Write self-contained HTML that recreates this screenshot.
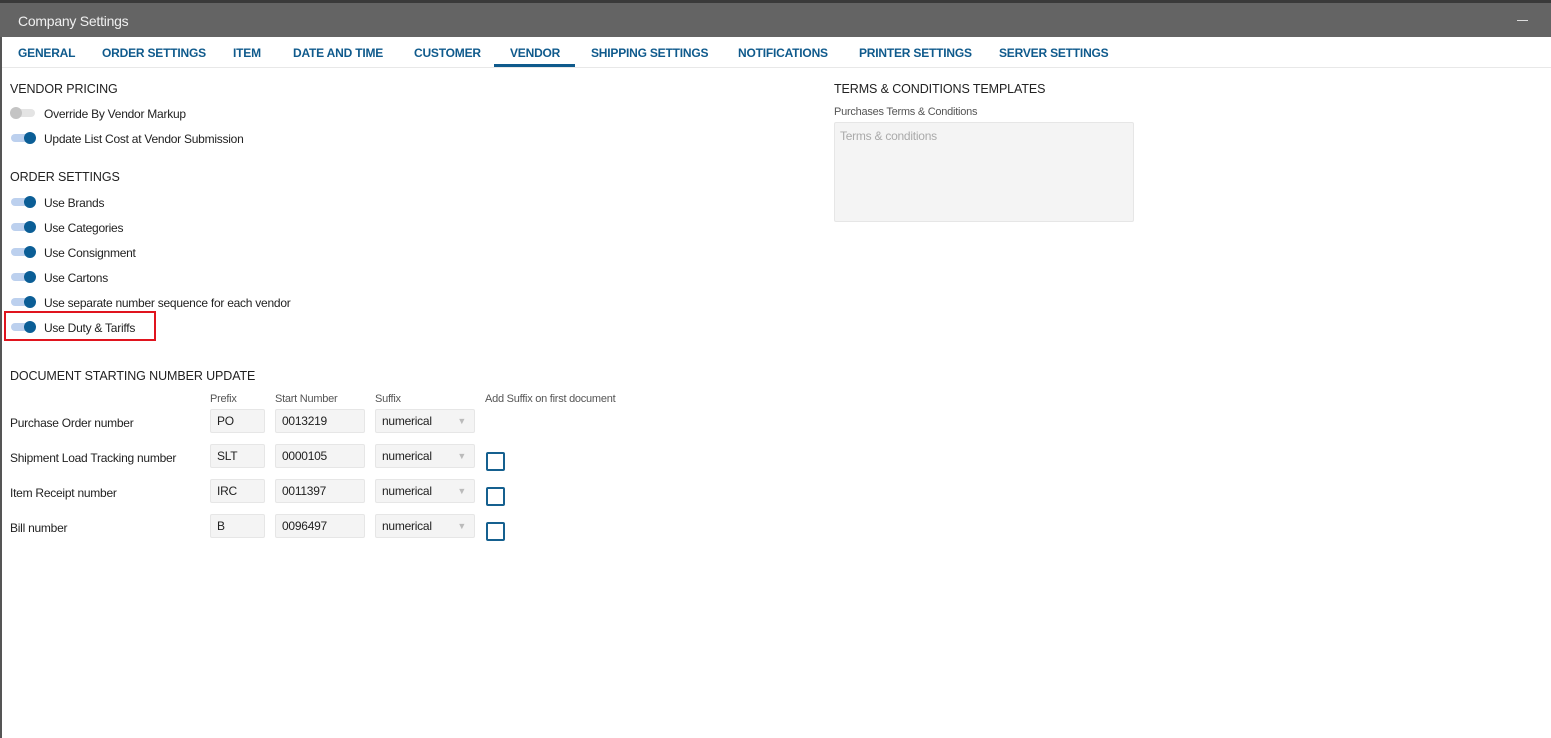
<!DOCTYPE html>
<html><head><style>
body{margin:0;width:1551px;height:738px;background:#fff;font-family:"Liberation Sans",sans-serif;color:#222;position:relative;overflow:hidden;font-size:12px;letter-spacing:-0.25px}
.a{position:absolute;white-space:nowrap}
.top{left:0;top:0;width:1551px;height:3px;background:#3a3a3a}
.title{left:0;top:3px;width:1551px;height:34px;background:#646464}
.lb{left:0;top:37px;width:2px;height:701px;background:#555}
.tab{top:46px;font-size:12px;font-weight:bold;color:#0f5a8c;letter-spacing:-0.2px}
.h{font-size:12.5px;color:#222;letter-spacing:-0.1px}
.tg{width:24px;height:8px;border-radius:4px;background:#bcd0ee}
.tg::after{content:"";position:absolute;right:-1px;top:-2px;width:12px;height:12px;border-radius:50%;background:#0b5e96}
.tg.off{background:#e4e4e4}
.tg.off::after{left:-1px;right:auto;background:#c4c4c4}
.in{height:24px;background:#f4f4f4;border:1px solid #e6e6e6;border-radius:2px;box-sizing:border-box;line-height:22px;padding-left:6px}
.cb{width:15px;height:15px;border:2px solid #15608f;border-radius:2px}
.sm{font-size:11px;color:#555}
</style></head><body>
<div class="a top"></div>
<div class="a title"></div>
<div class="a" style="left:18px;top:13px;color:#f0f0f0;font-size:14px;">Company Settings</div>
<div class="a" style="left:1517px;top:20px;width:11px;height:1px;background:#ddd"></div>
<div class="a lb"></div>
<div class="a tab" style="left:18px">GENERAL</div>
<div class="a tab" style="left:102px">ORDER SETTINGS</div>
<div class="a tab" style="left:233px">ITEM</div>
<div class="a tab" style="left:293px">DATE AND TIME</div>
<div class="a tab" style="left:414px">CUSTOMER</div>
<div class="a tab" style="left:510px">VENDOR</div>
<div class="a tab" style="left:591px">SHIPPING SETTINGS</div>
<div class="a tab" style="left:738px">NOTIFICATIONS</div>
<div class="a tab" style="left:859px">PRINTER SETTINGS</div>
<div class="a tab" style="left:999px">SERVER SETTINGS</div>
<div class="a" style="left:494px;top:64px;width:81px;height:3px;background:#0f5a8c"></div>
<div class="a" style="left:2px;top:67px;width:1549px;height:1px;background:#e8e8e8"></div>

<div class="a h" style="left:10px;top:82px">VENDOR PRICING</div>
<div class="a tg off" style="left:11px;top:109px"></div><div class="a" style="left:44px;top:107px">Override By Vendor Markup</div>
<div class="a tg" style="left:11px;top:134px"></div><div class="a" style="left:44px;top:132px">Update List Cost at Vendor Submission</div>

<div class="a h" style="left:10px;top:170px">ORDER SETTINGS</div>
<div class="a tg" style="left:11px;top:198px"></div><div class="a" style="left:44px;top:196px">Use Brands</div>
<div class="a tg" style="left:11px;top:223px"></div><div class="a" style="left:44px;top:221px">Use Categories</div>
<div class="a tg" style="left:11px;top:248px"></div><div class="a" style="left:44px;top:246px">Use Consignment</div>
<div class="a tg" style="left:11px;top:273px"></div><div class="a" style="left:44px;top:271px">Use Cartons</div>
<div class="a tg" style="left:11px;top:298px"></div><div class="a" style="left:44px;top:296px">Use separate number sequence for each vendor</div>
<div class="a tg" style="left:11px;top:323px"></div><div class="a" style="left:44px;top:321px">Use Duty &amp; Tariffs</div>
<div class="a" style="left:4px;top:311px;width:148px;height:26px;border:2px solid #e0141e"></div>

<div class="a h" style="left:10px;top:369px">DOCUMENT STARTING NUMBER UPDATE</div>
<div class="a sm" style="left:210px;top:393px">Prefix</div>
<div class="a sm" style="left:275px;top:393px">Start Number</div>
<div class="a sm" style="left:375px;top:393px">Suffix</div>
<div class="a sm" style="left:485px;top:393px">Add Suffix on first document</div>

<div class="a" style="left:10px;top:416px">Purchase Order number</div>
<div class="a" style="left:10px;top:451px">Shipment Load Tracking number</div>
<div class="a" style="left:10px;top:486px">Item Receipt number</div>
<div class="a" style="left:10px;top:521px">Bill number</div>

<div class="a in" style="left:210px;top:409px;width:55px">PO</div>
<div class="a in" style="left:275px;top:409px;width:90px">0013219</div>
<div class="a in" style="left:375px;top:409px;width:100px">numerical<span style="position:absolute;right:8px;top:0;color:#bbb;font-size:9px">▼</span></div>
<div class="a in" style="left:210px;top:444px;width:55px">SLT</div>
<div class="a in" style="left:275px;top:444px;width:90px">0000105</div>
<div class="a in" style="left:375px;top:444px;width:100px">numerical<span style="position:absolute;right:8px;top:0;color:#bbb;font-size:9px">▼</span></div>
<div class="a in" style="left:210px;top:479px;width:55px">IRC</div>
<div class="a in" style="left:275px;top:479px;width:90px">0011397</div>
<div class="a in" style="left:375px;top:479px;width:100px">numerical<span style="position:absolute;right:8px;top:0;color:#bbb;font-size:9px">▼</span></div>
<div class="a in" style="left:210px;top:514px;width:55px">B</div>
<div class="a in" style="left:275px;top:514px;width:90px">0096497</div>
<div class="a in" style="left:375px;top:514px;width:100px">numerical<span style="position:absolute;right:8px;top:0;color:#bbb;font-size:9px">▼</span></div>
<div class="a cb" style="left:486px;top:452px"></div>
<div class="a cb" style="left:486px;top:487px"></div>
<div class="a cb" style="left:486px;top:522px"></div>

<div class="a h" style="left:834px;top:82px">TERMS &amp; CONDITIONS TEMPLATES</div>
<div class="a sm" style="left:834px;top:106px">Purchases Terms &amp; Conditions</div>
<div class="a" style="left:834px;top:122px;width:300px;height:100px;background:#f4f4f4;border:1px solid #e6e6e6;border-radius:2px;box-sizing:border-box"></div>
<div class="a" style="left:840px;top:129px;color:#aaa">Terms &amp; conditions</div>
</body></html>
